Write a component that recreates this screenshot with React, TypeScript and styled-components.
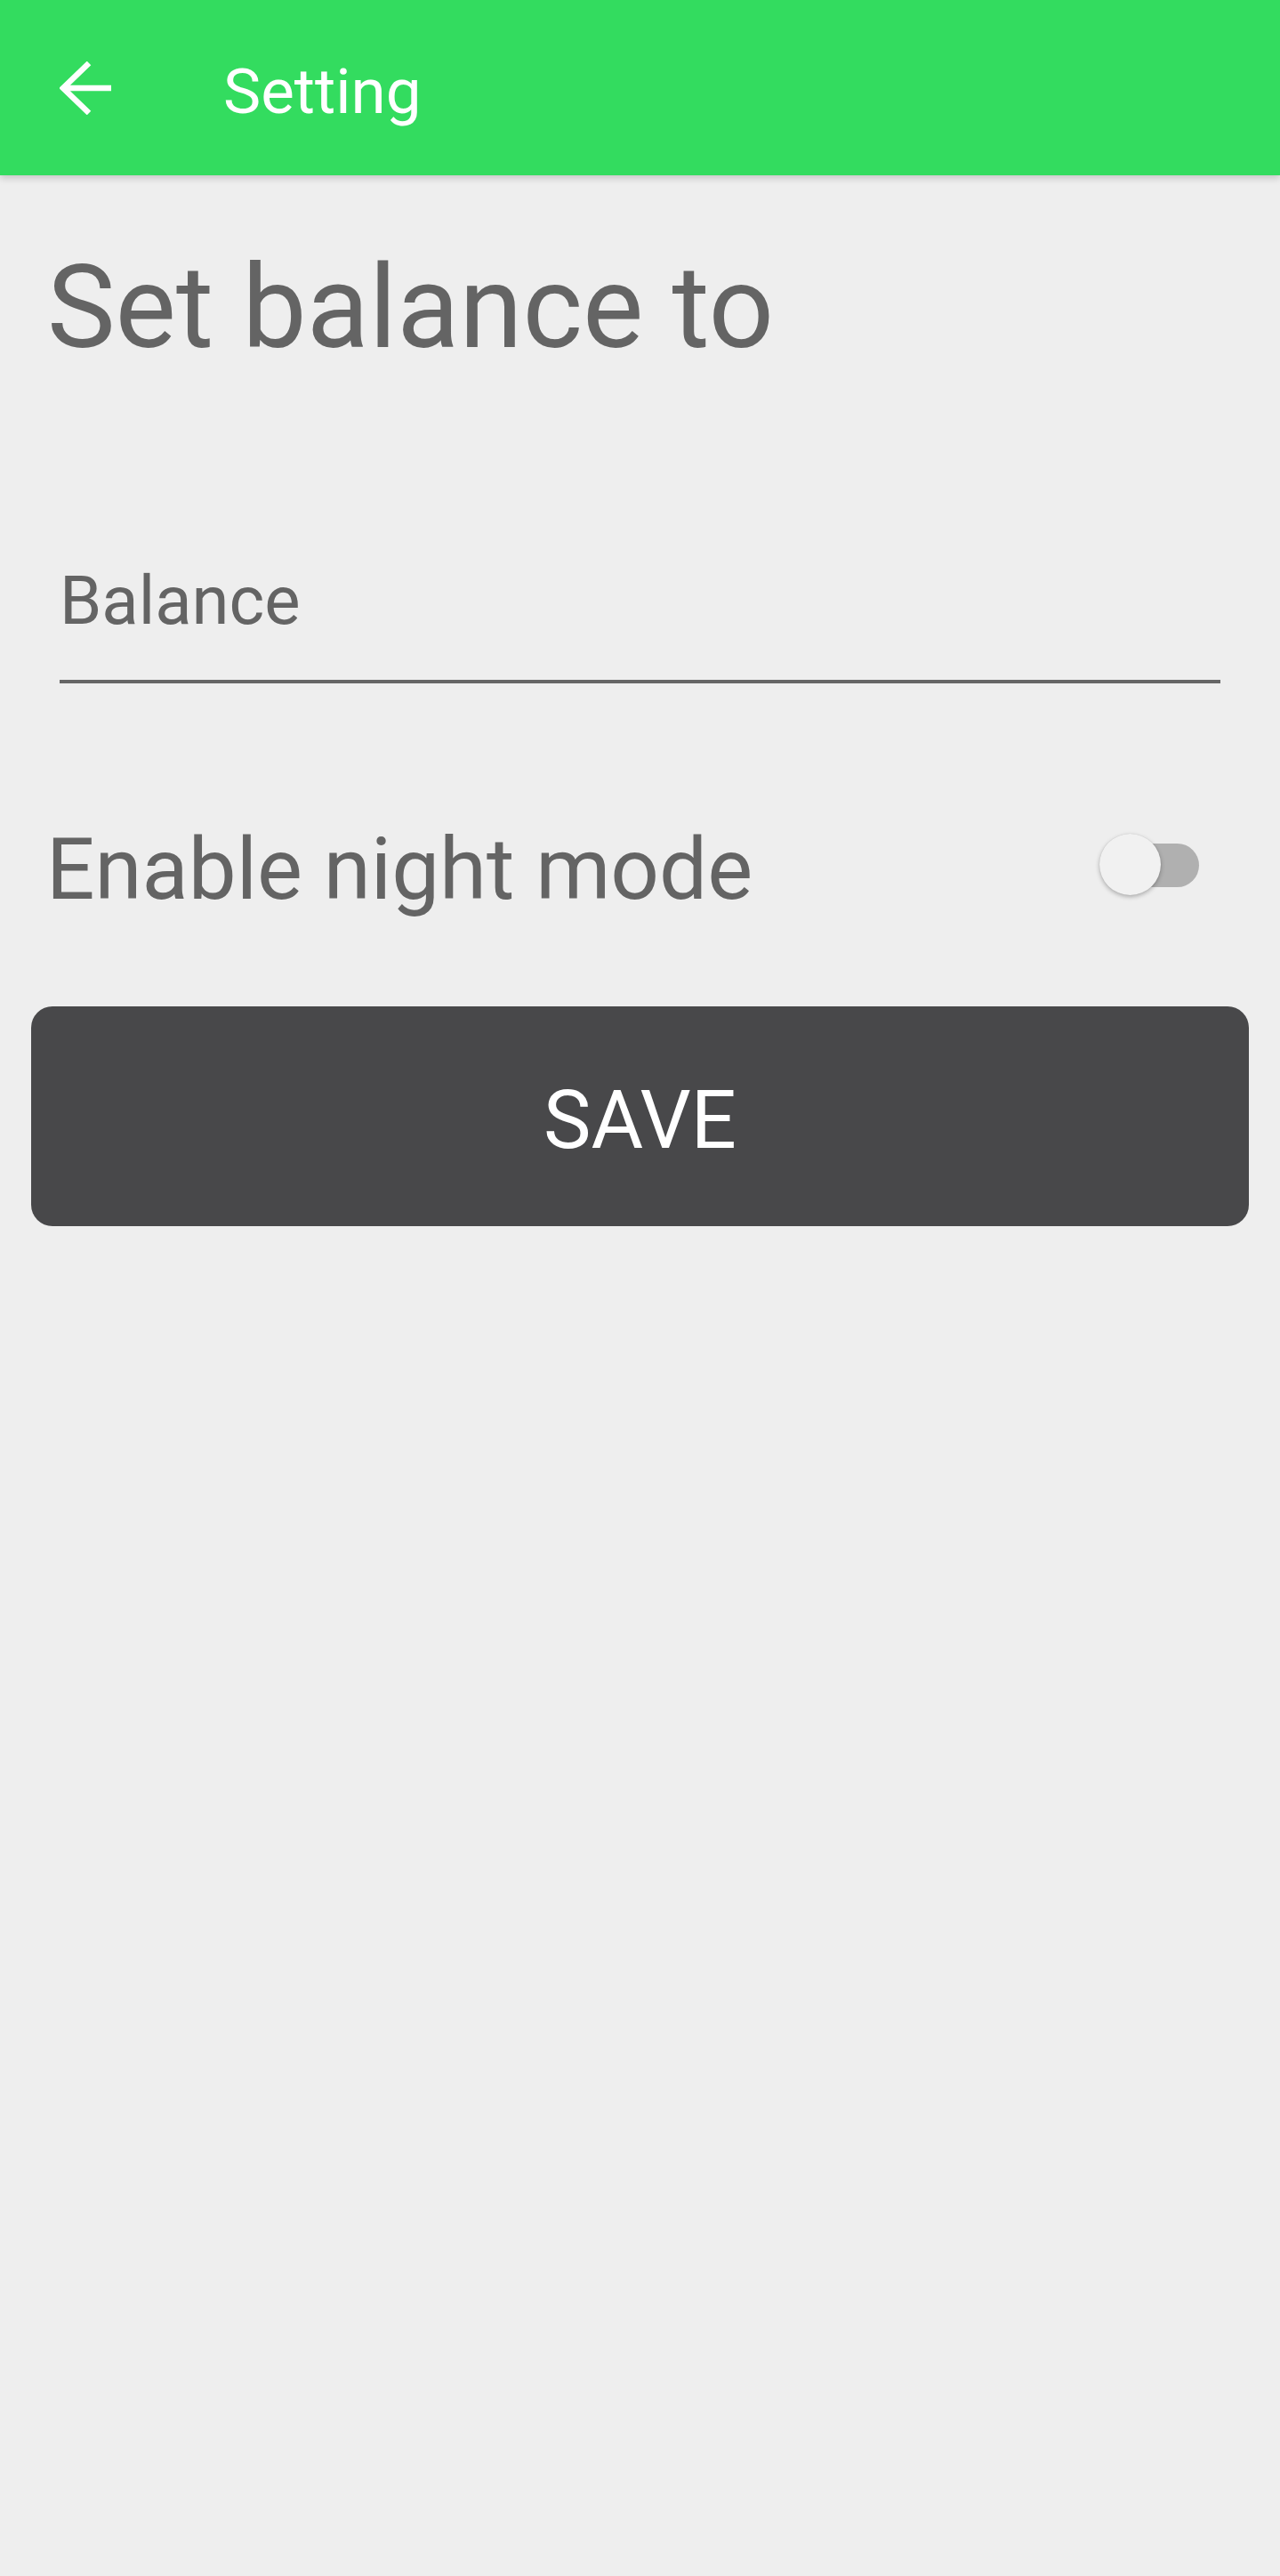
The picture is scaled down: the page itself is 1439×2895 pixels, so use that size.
import React from "react";
import styled, { createGlobalStyle } from "styled-components";

const GlobalStyle = createGlobalStyle`
  html, body {
    margin: 0;
    padding: 0;
    background: #eeeeee;
  }
  * { box-sizing: border-box; }
`;

const Screen = styled.div`
  min-height: 2895px;
  background: #eeeeee;
  font-family: Roboto, "Noto Sans", "Liberation Sans", sans-serif;
  color: #646464;
  display: flex;
  flex-direction: column;
`;

const AppBar = styled.header`
  height: 197px;
  background: #33dc5f;
  display: flex;
  align-items: center;
  padding: 8px 0 0 67px;
  box-shadow: 0 3px 8px rgba(0, 0, 0, 0.18);
  position: relative;
  z-index: 1;
`;

const BackButton = styled.button`
  width: 60px;
  height: 60px;
  margin-bottom: 7px;
  padding: 0;
  border: none;
  background: transparent;
  display: flex;
  cursor: pointer;
`;

const BarTitle = styled.h1`
  margin: 0 0 0 124px;
  font-size: 71px;
  line-height: 1;
  font-weight: 400;
  color: #ffffff;
`;

const Content = styled.main`
  display: flex;
  flex-direction: column;
`;

const Heading = styled.h2`
  margin: 84px 0 0 53px;
  font-size: 129px;
  line-height: 1;
  font-weight: 400;
  color: #646464;
`;

const Field = styled.label`
  display: block;
  margin: 227px 0 0 67px;
  width: 1305px;
  padding-bottom: 51px;
  border-bottom: 4px solid #666666;
`;

const Input = styled.input`
  display: block;
  width: 100%;
  height: 76px;
  padding: 0;
  border: none;
  outline: none;
  background: transparent;
  font-family: inherit;
  font-size: 76px;
  line-height: 76px;
  color: #646464;
  &::placeholder {
    color: #646464;
    opacity: 1;
  }
`;

const SettingRow = styled.div`
  margin: 161px 91px 0 52px;
  display: flex;
  justify-content: space-between;
  align-items: flex-start;
`;

const RowLabel = styled.span`
  font-size: 96px;
  line-height: 1;
  color: #646464;
`;

const Switch = styled.div`
  position: relative;
  width: 112px;
  height: 69px;
  margin-top: 8px;
`;

const Track = styled.div`
  position: absolute;
  left: 12px;
  top: 11px;
  width: 100px;
  height: 49px;
  border-radius: 25px;
  background: #b0b0b0;
`;

const Thumb = styled.div`
  position: absolute;
  left: 0;
  top: 0;
  width: 69px;
  height: 69px;
  border-radius: 50%;
  background: #f1f1f1;
  box-shadow: 0 2px 5px rgba(0, 0, 0, 0.28), 0 0 1px rgba(0, 0, 0, 0.15);
`;

const SaveButton = styled.button`
  margin: 106px 0 0 35px;
  width: 1369px;
  height: 247px;
  padding: 10px 0 0;
  border: none;
  border-radius: 24px;
  background: #48484a;
  color: #ffffff;
  font-family: inherit;
  font-size: 90px;
  line-height: 1;
  font-weight: 400;
  display: flex;
  align-items: center;
  justify-content: center;
  cursor: pointer;
`;

const BackArrow = () => (
  <svg width="60" height="60" viewBox="0 0 60 60" fill="none">
    <path
      d="M4 30 H58 M33 2 L4 30 L33 58"
      stroke="#ffffff"
      strokeWidth="6.5"
      strokeLinejoin="miter"
    />
  </svg>
);

export default function App() {
  return (
    <Screen>
      <GlobalStyle />
      <AppBar>
        <BackButton aria-label="Back">
          <BackArrow />
        </BackButton>
        <BarTitle>Setting</BarTitle>
      </AppBar>
      <Content>
        <Heading>Set balance to</Heading>
        <Field>
          <Input placeholder="Balance" />
        </Field>
        <SettingRow>
          <RowLabel>Enable night mode</RowLabel>
          <Switch>
            <Track />
            <Thumb />
          </Switch>
        </SettingRow>
        <SaveButton>SAVE</SaveButton>
      </Content>
    </Screen>
  );
}
